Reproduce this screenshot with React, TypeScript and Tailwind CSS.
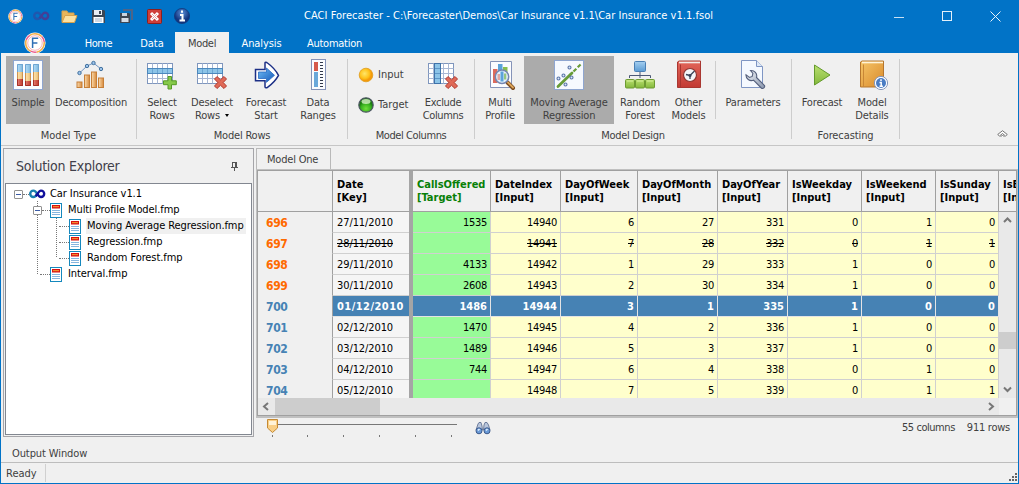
import React from "react";

type P = { children?: React.ReactNode; className?: string };

const Grads = () => (
  <svg width="0" height="0" className="absolute">
    <defs>
      <linearGradient id="book" x1="0" x2="1" y1="0" y2="1"><stop offset="0" stopColor="#f6c568" /><stop offset="1" stopColor="#d98a2b" /></linearGradient>
      <linearGradient id="red" x1="0" x2="0" y1="0" y2="1"><stop offset="0" stopColor="#e2655a" /><stop offset="1" stopColor="#c23a33" /></linearGradient>
      <linearGradient id="orange" x1="0" x2="1"><stop offset="0" stopColor="#fbdcae" /><stop offset="1" stopColor="#d88a3c" /></linearGradient>
      <linearGradient id="blue" x1="0" x2="0" y1="0" y2="1"><stop offset="0" stopColor="#a5cff0" /><stop offset="1" stopColor="#5b9bd3" /></linearGradient>
      <linearGradient id="green" x1="0" x2="0" y1="0" y2="1"><stop offset="0" stopColor="#b9e070" /><stop offset="1" stopColor="#84b83c" /></linearGradient>
      <linearGradient id="arrow" x1="0" x2="1" y1="0" y2="1"><stop offset="0" stopColor="#6fbcf5" /><stop offset="1" stopColor="#1256b8" /></linearGradient>
      <radialGradient id="yball" cx=".4" cy=".4"><stop offset="0" stopColor="#ffe66a" /><stop offset=".7" stopColor="#ffc21a" /><stop offset="1" stopColor="#f59a0a" /></radialGradient>
      <radialGradient id="gball" cx=".5" cy=".75"><stop offset="0" stopColor="#6fe03a" /><stop offset=".7" stopColor="#38b020" /><stop offset="1" stopColor="#1c7d10" /></radialGradient>
      <linearGradient id="tube" x1="0" x2="1"><stop offset="0" stopColor="#fff" stopOpacity=".4" /><stop offset=".5" stopColor="#fff" stopOpacity=".1" /><stop offset="1" stopColor="#000" stopOpacity=".12" /></linearGradient>
      <linearGradient id="steel" x1="0" x2="1" y1="0" y2="1"><stop offset="0" stopColor="#f3f6fa" /><stop offset="1" stopColor="#8794ac" /></linearGradient>
      <radialGradient id="info" cx=".5" cy=".3"><stop offset="0" stopColor="#5c8fd8" /><stop offset="1" stopColor="#12357f" /></radialGradient>
    </defs>
  </svg>
);

const I32 = ({ children }: P) => <svg width="32" height="32" viewBox="0 0 32 32" className="block shrink-0">{children}</svg>;

const AppLogo = ({ size }: { size: number }) => (
  <svg width={size} height={size} viewBox="0 0 22 22" className="block shrink-0">
    <circle cx="11" cy="11" r="10.6" fill="#fff" />
    <circle cx="11" cy="11" r="9.3" fill="none" stroke="#f3b04a" strokeWidth="1.6" strokeDasharray="13 6" />
    <circle cx="11" cy="11" r="9.3" fill="none" stroke="#ea5c8c" strokeWidth="1.4" strokeDasharray="6 13" strokeDashoffset="6" />
    <circle cx="11" cy="11" r="7.3" fill="none" stroke="#f2a0a8" strokeWidth=".8" />
    <path d="M8.6 16V6.2h5.6M8.6 11h4.8" fill="none" stroke="#2f6fb5" strokeWidth="1.5" />
  </svg>
);

const Loop = ({ a, b }: { a: string; b: string }) => (
  <svg width="17" height="12" viewBox="0 0 17 12" className="block shrink-0">
    <path d="M8.2 6C7 3.6 6 2.600 4.400 2.600A3.200 3.200 0 0 0 4.400 9C6 9 7 8.200 8.200 6" fill="none" stroke={a} strokeWidth="2.400" />
    <path d="M6.800 8.200C9 5 10 2.600 12 2.600A3.200 3.200 0 0 1 12 9C10.500 9 9.500 8 8.400 6" fill="none" stroke={b} strokeWidth="2.400" />
  </svg>
);

const SimpleIcon = () => (
  <I32>
    <rect x="1.500" y="1.500" width="29" height="29" fill="#fafcff" stroke="#8fa6d0" />
    {[[5, 13, 20], [13, 14, 22], [21, 13, 21]].map(([x, a, b]) => (
      <g key={x}>
        <rect x={x} y="5" width="6" height="22" fill="#8cc6ec" />
        <rect x={x} y={a} width="6" height={27 - a} fill="#f7cf85" />
        <rect x={x} y={b} width="6" height={27 - b} fill="#cf4436" />
        <rect x={x} y="5" width="6" height="22" fill="url(#tube)" />
        <path d={`M${x + 0.5} ${a}V5.500h5V${a}`} fill="none" stroke="#6fa6d3" />
        <path d={`M${x + 0.5} ${a}V${b}M${x + 5.5} ${a}V${b}`} stroke="#cf9450" />
        <path d={`M${x + 0.5} ${b}V26.500h5V${b}`} fill="none" stroke="#a83128" />
      </g>
    ))}
  </I32>
);

const DecompIcon = () => (
  <I32>
    {[[1.5, 23], [9, 16], [16, 13], [23, 19]].map(([x, y]) => (
      <rect key={x} x={x + 0.5} y={y} width="5" height={28.5 - y} fill="url(#orange)" stroke="#c67f38" />
    ))}
    <path d="M4.500 14L12 7l6.500-3L26 10" fill="none" stroke="#7096c4" />
    {[[4.5, 14], [12, 7], [18.5, 4], [26, 10]].map(([x, y]) => <circle key={x} cx={x} cy={y} r="1.700" fill="#9cc3ea" stroke="#43729f" />)}
  </I32>
);

const Grid = ({ cols }: { cols?: boolean }) => (
  <>
    <rect x="1.500" y="4.500" width="25" height="20" fill="#fff" stroke="#7f96bd" />
    <path d="M1.500 9.500h25M1.500 14.500h25M1.500 19.500h25M6.500 4.500v20M11.500 4.500v20M16.500 4.500v20M21.500 4.500v20" stroke="#a9b8d4" />
    {cols
      ? <><rect x="7.500" y="4.500" width="6" height="20" fill="#8cc4e8" stroke="#3f73a9" /><path d="M8 9.500h5M8 14.500h5M8 19.500h5" stroke="#5d96c8" /></>
      : <><rect x="1.500" y="9.500" width="25" height="5" fill="#8cc4e8" stroke="#4c88bd" /><path d="M6.500 10v4M11.500 10v4M16.500 10v4M21.500 10v4" stroke="#69a5d3" /></>}
  </>
);
const Plus = () => <path d="M22 17.500h3.500v4.300h4.800v3.900h-4.800v4.300H22v-4.300h-4.500v-3.900H22z" fill="#86c94a" stroke="#569a26" />;
const Cross = () => <path d="M18.500 20l2.500-2.500 3.500 3.300 3.500-3.300 2.500 2.500-3.300 3.500 3.300 3.500-2.500 2.500-3.500-3.200-3.500 3.200-2.500-2.500 3.300-3.500z" fill="#e06a58" stroke="#b23a2f" />;

const StartIcon = () => (
  <I32>
    <path d="M5.500 10.500H15V4c0-1 1.500-.8 2.500 0 4.500 3.300 8.500 7.500 11 12.300-2.500 4.700-6.500 8.700-11 12-1 .8-2.500.8-2.500-.5v-6H5.500z" fill="#fff" stroke="#1c2f86" strokeWidth="1.500" />
    <path d="M8.500 13h8V9l8 7.300-8 7V19.500h-8z" fill="url(#arrow)" stroke="#2767c0" strokeWidth=".8" />
  </I32>
);

const RangesIcon = () => (
  <I32>
    <rect x="9.500" y=".5" width="14" height="30" fill="#fbfcff" stroke="#8593b8" />
    <rect x="12" y="3" width="4" height="9" fill="#d65a4c" /><rect x="12" y="13" width="4" height="15" fill="#6aa8da" />
    <path d="M18 3.500h3M18 6.500h3M18 9.500h3M18 12.500h3M18 15.500h3M18 18.500h3M18 21.500h3M18 24.500h3M18 27.500h3" stroke="#30384a" />
  </I32>
);

const MultiIcon = () => (
  <I32>
    <path d="M6.500 2.500h21v26h-21z" fill="#fbfcff" stroke="#8593b8" />
    <rect x="9" y="10" width="4.500" height="14" fill="#dd6a5c" /><rect x="14" y="5" width="4.500" height="14" fill="#5ba3d9" /><rect x="19" y="8" width="4.500" height="12" fill="#8abf4e" />
    <path d="M23.500 23.500l5.500 5.500" stroke="#7b4a1f" strokeWidth="4" strokeLinecap="round" /><path d="M24 23.500l5 5" stroke="#dca55a" strokeWidth="1.800" strokeLinecap="round" />
    <circle cx="18" cy="17.700" r="6.700" fill="#e4f1fc" stroke="#7486b0" strokeWidth="1.500" />
    <rect x="13.500" y="15" width="2.500" height="6" fill="#e3a59e" /><rect x="16.500" y="12.500" width="3" height="10" fill="#5ba3d9" /><rect x="20" y="14.500" width="2.300" height="6" fill="#94c67e" />
  </I32>
);

const ScatterIcon = () => (
  <I32>
    <rect x="1.500" y="1.500" width="29" height="29" fill="#f6f9fe" stroke="#8fa6d0" />
    <path d="M5 27.500L19 14" stroke="#679c38" strokeWidth="2.800" strokeLinecap="round" />
    <path d="M20.500 12.500L28.500 4.500" stroke="#679c38" strokeWidth="2.200" strokeDasharray="4 2" />
    {[[5.5, 19.500], [10.500, 16.500], [12.5, 25.5], [18.5, 18.5], [16.5, 8.5]].map(([x, y]) => <circle key={x} cx={x} cy={y} r="1.500" fill="#dce8f8" stroke="#5b75a8" strokeWidth="1.100" />)}
  </I32>
);

const ForestIcon = () => (
  <I32>
    <path d="M16 12v5M5.500 19v-2.500h21V19M16 16v3" fill="none" stroke="#4b5876" />
    <rect x="10.500" y="2.500" width="11" height="10" rx="1" fill="url(#blue)" stroke="#4a7fb4" />
    {[1.5, 11.5, 21.5].map((x) => <g key={x}><rect x={x} y="20.500" width="9" height="8.500" rx="1" fill="url(#green)" stroke="#6d9a32" /><path d={`M${x + 1.5} 22h6`} stroke="#d6ef9e" /></g>)}
  </I32>
);

const OtherIcon = () => (
  <I32>
    <path d="M4.500 3L6 2h21.500v26.500H4.500z" fill="url(#red)" stroke="#a93731" />
    <path d="M6 3.500h21" stroke="#f3ebe8" strokeWidth="1.600" /><path d="M7.500 5.500v23" stroke="#a83530" />
    <circle cx="17" cy="16" r="6.500" fill="#f4f5f8" stroke="#8d3430" strokeWidth="1.200" />
    <path d="M21.500 12l-4.500 4.500-4-1M17 16v4" fill="none" stroke="#3a4358" strokeWidth="1.300" /><circle cx="17" cy="16.500" r="1.500" fill="#3a4358" />
  </I32>
);

const ParamIcon = () => (
  <I32>
    <path d="M4.500 1.500h15l6 6v21h-21z" fill="#f5f9ff" stroke="#7f96c4" /><path d="M19.500 1.500v6h6" fill="#dfe9f7" stroke="#7f96c4" />
    <path d="M13.500 11.500a5.500 5.500 0 0 1 6 7l8 8c.8 1.700-1.300 3.600-3 2.700l-8-8a5.500 5.500 0 0 1-7.500-5.500l3.500 2.700 2.700-1 .7-3z" fill="url(#steel)" stroke="#56617d" strokeWidth="1.100" />
  </I32>
);

const PlayIcon = () => <I32><path d="M8.500 6L24 16 8.500 26z" fill="url(#green)" stroke="#649a2c" /></I32>;

const DetailsIcon = () => (
  <I32>
    <path d="M4.500 3L6 2h21.500v26H4.500z" fill="url(#book)" stroke="#b5762e" /><path d="M6 3.500h21" stroke="#fff3d8" strokeWidth="1.600" /><path d="M7.500 5.500v22.500" stroke="#c98736" />
    <circle cx="25" cy="24" r="6.600" fill="#fff" stroke="#8497bd" /><circle cx="25" cy="24" r="5" fill="#4a7dc4" />
    <path d="M25 20.200v1.800M23.500 23.500h1.700v4M23.500 27.300h3.400" fill="none" stroke="#fff" strokeWidth="1.500" />
  </I32>
);

const Big = ({ icon, a, b, w, on, drop }: { icon: React.ReactNode; a: string; b?: string; w: string; on?: boolean; drop?: boolean }) => (
  <div className={`flex h-[68px] shrink-0 flex-col items-center pt-[3px] text-center leading-[13px] tracking-[-0.15px] whitespace-nowrap ${w} ${on ? "bg-[#ababab]" : ""}`}>
    {icon}
    <div className="mt-[5px]">{a}</div>
    {b && <div className="flex items-center gap-[5px]">{b}{drop && <span className="border-x-[2.5px] border-t-[3px] border-x-transparent border-t-black" />}</div>}
  </div>
);

const Group = ({ children, w, title, track = "" }: { children: React.ReactNode; w: string; title: string; track?: string }) => (
  <section className={`flex h-full shrink-0 flex-col ${w}`}>
    <div className="flex h-[71px] pt-[3px]">{children}</div>
    <div className={`pt-[5px] text-center leading-[14px] ${track}`}>{title}</div>
  </section>
);
const Sep = ({ short }: { short?: boolean }) => <div className={`w-px shrink-0 bg-[#cdcdcd] ${short ? "mt-[5px] h-[58px]" : "mt-[6px] h-20"}`} />;

const cols: [string, string, string][] = [
  ["DateIndex", "w-[70px]", "Input"], ["DayOfWeek", "w-[77px]", "Input"], ["DayOfMonth", "w-20", "Input"], ["DayOfYear", "w-[70px]", "Input"],
  ["IsWeekday", "w-[74px]", "Input"], ["IsWeekend", "w-[74px]", "Input"], ["IsSunday", "w-[63px]", "Input"],
];
const rows: string[][] = [
  ["696", "27/11/2010", "1535", "14940", "6", "27", "331", "0", "1", "0"],
  ["697", "28/11/2010", "", "14941", "7", "28", "332", "0", "1", "1"],
  ["698", "29/11/2010", "4133", "14942", "1", "29", "333", "1", "0", "0"],
  ["699", "30/11/2010", "2608", "14943", "2", "30", "334", "1", "0", "0"],
  ["700", "01/12/2010", "1486", "14944", "3", "1", "335", "1", "0", "0"],
  ["701", "02/12/2010", "1470", "14945", "4", "2", "336", "1", "0", "0"],
  ["702", "03/12/2010", "1489", "14946", "5", "3", "337", "1", "0", "0"],
  ["703", "04/12/2010", "744", "14947", "6", "4", "338", "0", "1", "0"],
  ["704", "05/12/2010", "", "14948", "7", "5", "339", "0", "1", "1"],
];

const Row = ({ r, i }: { r: string[]; i: number }) => {
  const sel = i === 4;
  const cell = sel ? "bg-[#4682b4] text-white font-bold border-[#e4e4e4]" : "border-[#d0d0d0]";
  const strike = i === 1 ? "line-through" : "";
  return (
    <div className="flex h-[21px] shrink-0 leading-[21px]">
      <div className={`w-[74px] shrink-0 pt-px pl-2 text-[12px] font-bold tracking-[-0.35px] ${i < 4 ? "text-[#ff6a00]" : "text-[#4682b4]"}`}>{r[0]}</div>
      <div className={`w-[77px] shrink-0 overflow-hidden border-b border-l border-l-[#a0a0a0] pl-1 ${cell} ${sel ? "tracking-[0.45px]" : "bg-[#f5f5f5] tracking-[-0.1px]"} ${strike}`}>{r[1]}</div>
      <div className="w-1 shrink-0 bg-[#a5a5a5]" />
      <div className={`w-[78px] shrink-0 border-r border-b pr-[3px] text-right ${sel ? "" : "bg-[#98fb98] tracking-[-0.3px]"} ${cell} ${strike}`}>{r[2]}</div>
      {cols.map((c, k) => (
        <div key={c[0]} className={`shrink-0 border-r border-b pr-[3px] text-right ${c[1]} ${sel ? "" : "bg-[#ffffcc] tracking-[-0.3px]"} ${cell} ${strike}`}>{r[k + 3]}</div>
      ))}
    </div>
  );
};

const Doc = () => (
  <svg width="12" height="15" viewBox="0 0 12 15" className="block shrink-0">
    <rect x=".5" y=".5" width="11" height="14" fill="#fff" stroke="#1588bd" />
    <rect x="2" y="2" width="8" height="3.500" fill="#d81010" /><path d="M3 3.700h6" stroke="#ffd23c" strokeWidth=".8" />
    <path d="M2 7.500h8M2 9.500h8M2 11.500h8" stroke="#86b5de" />
  </svg>
);
const Expand = () => <span className="flex size-[9px] shrink-0 items-center justify-center rounded-[1px] border border-[#919191] bg-white"><span className="h-px w-[5px] bg-[#3b5ba5]" /></span>;
const Dots = ({ w = "w-2" }: { w?: string }) => <span className={`shrink-0 border-t border-dotted border-[#777] ${w}`} />;

const Solution = () => (
  <aside className="flex h-[289px] w-[251px] shrink-0 flex-col border border-[#a5a5a9] px-px pb-px">
    <div className="flex h-[34px] shrink-0 items-center justify-between pr-[13px] pl-[11px] text-[14px] text-[#3f3f4a]">
      <span className="pt-px tracking-[-0.25px] whitespace-nowrap">Solution Explorer</span>
      <svg width="8" height="9" viewBox="0 0 8 9"><path d="M1.500 0v5M1 .5h5M0 5.500h7M3.500 6v3" stroke="#555" fill="none" /><path d="M5 0v5" stroke="#555" strokeWidth="2" /></svg>
    </div>
    <div className="relative flex flex-1 flex-col border border-[#828790] bg-white pt-[2px] tracking-[-0.09px] text-black">
      <svg width="60" height="92" className="absolute top-0 left-0"><path d="M31.500 17v73M50.500 34v40" stroke="#777" strokeDasharray="1 1" fill="none" /></svg>
      <div className="relative flex h-4 items-center pl-2"><Expand /><Dots w="w-[6px]" /><span className="w-[21px]"><Loop a="#1a7fae" b="#10109c" /></span><span>Car Insurance v1.1</span></div>
      <div className="relative flex h-4 items-center pl-[27px]"><Expand /><Dots /><Doc /><span className="ml-[6px]">Multi Profile Model.fmp</span></div>
      {["Moving Average Regression.fmp", "Regression.fmp", "Random Forest.fmp"].map((t, i) => (
        <div key={t} className="relative flex h-4 items-center pl-[53px]"><Dots w="w-[10px]" /><Doc /><span className={`ml-[5px] pr-[2px] pl-px leading-4 whitespace-nowrap ${i === 0 ? "bg-[#f0f0f0]" : ""}`}>{t}</span></div>
      ))}
      <div className="relative flex h-4 items-center pl-[34px]"><Dots w="w-[10px]" /><Doc /><span className="ml-[6px]">Interval.fmp</span></div>
    </div>
  </aside>
);

const Chev = ({ d }: { d: string }) => <svg width="9" height="9" viewBox="0 0 9 9"><path d={d} fill="none" stroke="#777" strokeWidth="2" /></svg>;

const DataGrid = () => (
  <div className="h-[249px] border-t border-r border-b-2 border-l border-[#c0c0c0]">
    <div className="flex h-full flex-col border border-[#a0a0a0]">
      <div className="flex h-[41px] shrink-0 overflow-hidden border-b border-[#a0a0a0] leading-[13px] font-bold text-black">
        <div className="w-[74px] shrink-0" />
        <div className="w-[77px] shrink-0 border-l border-[#a0a0a0] pt-[7px] pl-1">Date<br />[Key]</div>
        <div className="w-1 shrink-0 bg-[#a5a5a5]" />
        <div className="w-[78px] shrink-0 border-r border-[#a0a0a0] pt-[7px] pl-1 text-[#078007]">CallsOffered<br />[Target]</div>
        {cols.map((c) => <div key={c[0]} className={`shrink-0 border-r border-[#a0a0a0] pt-[7px] pl-1 ${c[1]}`}>{c[0]}<br />[{c[2]}]</div>)}
        <div className="w-[17px] shrink-0 overflow-hidden pt-[7px] pl-1 whitespace-nowrap">IsB<br />[Inp</div>
      </div>
      <div className="flex min-h-0 flex-1">
        <div className="h-[186px] w-[741px] shrink-0 overflow-hidden text-black">{rows.map((r, i) => <Row key={r[0]} r={r} i={i} />)}</div>
        <div className="flex h-[186px] flex-1 flex-col items-center bg-[#e9e9e9] pt-1">
          <Chev d="M1 6l3.500-3.500L8 6" />
          <div className="mt-[107px] h-[17px] w-full bg-[#cdcdcd]" />
          <div className="mt-9"><Chev d="M1 2.500L4.500 6 8 2.500" /></div>
        </div>
      </div>
      <div className="flex h-[17px] shrink-0">
        <div className="flex flex-1 items-center bg-[#e9e9e9] pl-[4px]">
          <Chev d="M6 1L2 4.500 6 8" /><div className="ml-1 h-full w-[105px] bg-[#cdcdcd]" /><div className="flex-1" /><div className="mr-[3px]"><Chev d="M2 1l4 3.500L2 8" /></div>
        </div>
        <div className="w-[17px]" />
      </div>
    </div>
  </div>
);

const Footer = () => (
  <div className="flex h-[27px] items-start pr-2 pl-[11px]">
    <svg width="196" height="22" viewBox="0 0 196 22">
      <path d="M10 6.500h180" stroke="#777" />
      <path d="M5.500 17v2M40.500 17v2M76.500 17v2M112.500 17v2M148.500 17v2M184.500 17v2" stroke="#777" />
      <path d="M.5 1.500h10v8.500l-5 4.500-5-4.500z" fill="#f9cf86" stroke="#c58a34" /><path d="M2 3h7v4H2z" fill="#fff3d8" />
    </svg>
    <svg width="16" height="14" viewBox="0 0 16 14" className="mt-[3px] ml-3">
      <path d="M4 1.500h2L7 5l.5 4H1L3 3zM10 1.500h2L13.500 4 15 9H8.500L9 4z" fill="#b9c6dc" stroke="#56678a" strokeWidth=".8" />
      <circle cx="4" cy="9.800" r="3" fill="#6a9ad6" stroke="#3c5a8c" /><circle cx="12" cy="9.800" r="3" fill="#6a9ad6" stroke="#3c5a8c" />
      <path d="M3 9.500l1.500-1.500M11 9.500l1.500-1.500" stroke="#e4f1ff" strokeWidth="1.500" />
    </svg>
    <div className="mt-[3px] ml-auto flex gap-3 leading-[14px]"><span className="tracking-[-0.45px]">55 columns</span><span className="tracking-[-0.25px]">911 rows</span></div>
  </div>
);

export default function App() {
  return (
    <div className="flex h-[484px] w-[1019px] flex-col overflow-hidden border-x border-b border-[#0173c7] bg-[#f0f0f0] font-['DejaVu_Sans_Condensed','DejaVu_Sans',sans-serif] text-[11px] [font-stretch:condensed] text-[#404040]">
      <Grads />
      <header className="h-[53px] shrink-0 bg-[#0173c7] text-white">
        <div className="flex h-8 items-center pl-[6px]">
          <div className="w-[26px] shrink-0 pl-px"><AppLogo size={15} /></div>
          <div className="w-[28px] shrink-0"><Loop a="#1f57ae" b="#433f97" /></div>
          <div className="w-[30px] shrink-0"><svg width="17" height="15" viewBox="0 0 17 15"><path d="M1 13V2h5l1 2h6v3" fill="#e8b65c" stroke="#d9a24a" /><path d="M1 13.500L4 6.500h12l-2.500 7z" fill="#fbe1a2" stroke="#d9a24a" /></svg></div>
          <div className="w-[28px] shrink-0"><svg width="15" height="15" viewBox="0 0 15 15"><path d="M1 1h12l1 1v12H1z" fill="#3c4654" /><rect x="3" y="1" width="8" height="5" fill="#e8edf4" /><rect x="8" y="2" width="2" height="3" fill="#3c4654" /><rect x="2.500" y="8" width="10" height="6" fill="#fff" /><path d="M4 10h7M4 12h7" stroke="#9fb0c6" /></svg></div>
          <div className="w-[28px] shrink-0"><svg width="15" height="15" viewBox="0 0 15 15"><path d="M4 1h9v10" fill="none" stroke="#4d6488" strokeWidth="2" /><path d="M1 4h9l1 1v9H1z" fill="#3c4654" /><rect x="3" y="4" width="5" height="3" fill="#c9d3e0" /><rect x="2.500" y="9" width="7" height="4" fill="#d5dce6" /></svg></div>
          <div className="w-[27px] shrink-0"><svg width="15" height="15" viewBox="0 0 15 15"><rect x=".5" y=".5" width="14" height="14" rx="1" fill="#cf3f3a" stroke="#8f1e1d" /><path d="M4 4l7 7M11 4l-7 7" stroke="#fff" strokeWidth="3" /><path d="M5 5l5 5M10 5l-5 5" stroke="#d9a5a3" /></svg></div>
          <svg width="16" height="16" viewBox="0 0 16 16" className="shrink-0"><circle cx="8" cy="8" r="7.600" fill="url(#info)" stroke="#123a7d" strokeWidth=".8" /><path d="M8 2.500v2.200M6 7h2.500v5M5.500 12.500h5.500" fill="none" stroke="#fff" strokeWidth="2" /></svg>
          <div className="ml-[114px] text-[11px] tracking-[0.04px] whitespace-nowrap">CACI Forecaster - C:\Forecaster\Demos\Car Insurance v1.1\Car Insurance v1.1.fsol</div>
          <div className="mr-[17px] ml-auto flex items-center gap-[38px]">
            <span className="mt-[2px] h-px w-[10px] bg-[#c8e0f3]" /><span className="size-[10px] border border-[#e3f0f9]" />
            <svg width="11" height="11" viewBox="0 0 11 11"><path d="M.5 .5l10 10M10.500 .5l-10 10" stroke="#e9f3fa" /></svg>
          </div>
        </div>
        <nav className="flex h-[21px] leading-[24px]">
          <div className="w-[67px] pl-[23px]"><AppLogo size={22} /></div>
          <div className="w-[61px] text-center tracking-[-0.4px]">Home</div><div className="w-[46px] text-center">Data</div>
          <div className="w-[54px] bg-[#f0f0f0] text-center tracking-[-0.3px] text-[#404040]">Model</div>
          <div className="w-[65px] text-center tracking-[-0.1px]">Analysis</div><div className="w-[81px] text-center tracking-[-0.25px]">Automation</div>
        </nav>
      </header>

      <div className="flex h-[93px] shrink-0 border-b border-[#c6c6c6]">
        <Group w="w-[135px]" title="Model Type">
          <Big w="ml-[5px] w-11 tracking-[-0.4px]" icon={<SimpleIcon />} a="Simple" on /><Big w="w-[82px] tracking-[-0.4px]" icon={<DecompIcon />} a="Decomposition" />
        </Group>
        <Sep />
        <Group w="w-[210px]" title="Model Rows" track="tracking-[-0.2px]">
          <Big w="ml-[3px] w-11" icon={<I32><Grid /><Plus /></I32>} a="Select" b="Rows" />
          <Big w="w-14" icon={<I32><Grid /><Cross /></I32>} a="Deselect" b="Rows" drop />
          <Big w="w-[52px]" icon={<StartIcon />} a="Forecast" b="Start" /><Big w="w-[52px]" icon={<RangesIcon />} a="Data" b="Ranges" />
        </Group>
        <Sep />
        <Group w="w-[126px]" title="Model Columns" track="tracking-[-0.4px]">
          <div className="flex w-[69px] flex-col gap-[14px] pt-[11px] pl-[10px]">
            <div className="flex h-4 items-center gap-1"><svg width="16" height="16"><circle cx="8" cy="8" r="6.800" fill="url(#yball)" stroke="#e09d1c" strokeWidth=".8" /></svg>Input</div>
            <div className="flex h-4 items-center gap-1"><svg width="16" height="16"><circle cx="8" cy="8" r="7.200" fill="url(#gball)" stroke="#4b5560" strokeWidth="1.200" /><ellipse cx="8" cy="4.500" rx="4.500" ry="2.500" fill="#e3f8d3" opacity=".75" /></svg>Target</div>
          </div>
          <Big w="w-[52px] tracking-[-0.35px]" icon={<I32><Grid cols /><Cross /></I32>} a="Exclude" b="Columns" />
        </Group>
        <Sep />
        <Group w="w-[316px]" title="Model Design" track="tracking-[-0.3px]">
          <Big w="ml-[3px] mr-[2px] w-11" icon={<MultiIcon />} a="Multi" b="Profile" />
          <Big w="w-[90px]" icon={<ScatterIcon />} a="Moving Average" b="Regression" on />
          <Big w="w-[52px]" icon={<ForestIcon />} a="Random" b="Forest" /><Big w="mr-1 w-[45px]" icon={<OtherIcon />} a="Other" b="Models" />
          <Sep short />
          <Big w="ml-[3px] w-[68px]" icon={<ParamIcon />} a="Parameters" />
        </Group>
        <Sep />
        <Group w="w-[107px]" title="Forecasting" track="tracking-[-0.1px]">
          <Big w="ml-1 w-[52px]" icon={<PlayIcon />} a="Forecast" /><Big w="w-12" icon={<DetailsIcon />} a="Model" b="Details" />
        </Group>
        <Sep />
        <svg width="11" height="8" viewBox="0 0 11 8" className="mt-[77px] mr-[10px] ml-auto"><path d="M.7 4.500L5.500 .7l4.800 3.800L8.500 6l-3-2.500L2.500 6zM3.500 7l2-2 2 2" fill="#fff" stroke="#666" strokeWidth=".9" /></svg>
      </div>

      <main className="flex h-[316px] shrink-0">
        <div className="w-[255px] shrink-0 pt-[2px] pl-[2px]">
          <Solution />
          <div className="pt-[10px] pl-[9px] leading-[14px] tracking-[-0.1px]">Output Window</div>
        </div>
        <div className="w-[762px] pt-[2px]">
          <div className="h-[21px] w-[75px] border-x border-t border-[#b9b9b9] pl-[10px] leading-[21px] tracking-[-0.2px]">Model One</div>
          <DataGrid />
          <Footer />
        </div>
      </main>

      <footer className="flex min-h-0 flex-1 border-t border-[#bdbdbd]">
        <div className="my-px w-[45px] border-r border-[#d0d0d0] pl-[5px] leading-[19px]">Ready</div>
        <svg width="9" height="9" viewBox="0 0 9 9" className="mt-[10px] ml-auto"><path d="M6 0h2v2H6zM3 3h2v2H3zM6 3h2v2H6zM0 6h2v2H0zM3 6h2v2H3zM6 6h2v2H6z" fill="#666" /></svg>
      </footer>
    </div>
  );
}
